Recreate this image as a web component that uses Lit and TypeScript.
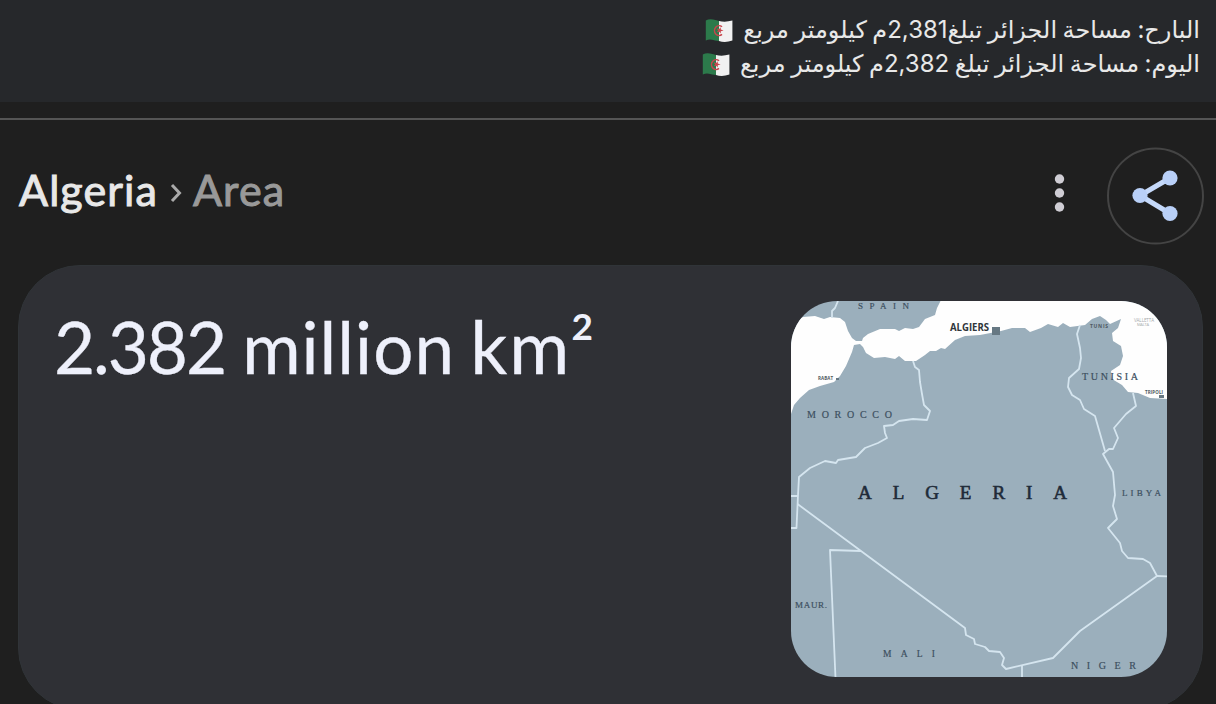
import { LitElement, css, html, svg } from "lit";
import { customElement, property } from "lit/decorators.js";

@customElement("flag-dz")
export class FlagDz extends LitElement {
    static styles = css`
    :host {
        display: block;
        flex: none;
        width: 28px;
        height: 25px;
        margin-top: 2px;
        white-space: normal;
    }

    svg {
        display: block;
    }
    `;

    render() {
        return html`
        <svg width="28" height="25" viewBox="0 0 28 25">
            <path fill="#2c7a4b" d="M.8 2.6Q4 .8 8 1.6T14 3V23Q10 22.6 7 21.8T.8 22.6Z"/>
            <path fill="#f1f1f1" d="M14 3Q20 4.6 27.4 2.6V22.6Q20 25 14 23Z"/>
            <path fill="none" stroke="#c8454c" stroke-width="1.5" d="M17 8.8A4.6 4.9 0 1 0 17 16.4"/>
            <path fill="#c8454c" d="M18.6 12.5l-2.8.8-.1 2.2-1.6-1.8-2.4.6 1.4-1.9-1.4-1.9 2.4.6 1.6-1.8.1 2.3z"/>
        </svg>
        `;
    }
}

interface Label {
    text: string;
    x: number;
    y: number;
    width: number;
    size: number;
    kind: string;
}

const labels: Label[] = [
    { text: "SPAIN", x: 858, y: 309, width: 51, size: 9, kind: "place" },
    { text: "MOROCCO", x: 807, y: 418, width: 85, size: 10, kind: "place" },
    { text: "ALGERIA", x: 858, y: 499, width: 209, size: 19, kind: "main" },
    { text: "TUNISIA", x: 1082, y: 380, width: 56, size: 10, kind: "place" },
    { text: "LIBYA", x: 1122, y: 496, width: 39, size: 9, kind: "place" },
    { text: "MAUR.", x: 795, y: 608, width: 32, size: 9, kind: "place" },
    { text: "MALI", x: 883, y: 657, width: 52, size: 9.5, kind: "place" },
    { text: "NIGER", x: 1071, y: 669, width: 65, size: 10, kind: "place" },
    { text: "ALGIERS", x: 950, y: 331, width: 39, size: 10.5, kind: "capital" },
    { text: "RABAT", x: 818, y: 380, width: 15, size: 4.5, kind: "tiny" },
    { text: "TUNIS", x: 1090, y: 328, width: 18, size: 5, kind: "tiny" },
    { text: "TRIPOLI", x: 1145, y: 394, width: 18, size: 4.5, kind: "tiny" },
    { text: "VALLETTA", x: 1134, y: 322, width: 20, size: 4.5, kind: "faint" },
    { text: "MALTA", x: 1137, y: 326, width: 12, size: 4, kind: "faint" },
];

const borders = [
    "M838 301L835 308L832 311L832 318",
    "M913 361L915 367L919 370L920 382L922 394L924 405L930 411L927 420L913 419L899 421L893 425L884 426L885 433L887 438L878 443L865 448L856 457L838 460L836 463L825 461L810 468L799 477L798 495L796.500 528L791 528",
    "M791 496L798 496M797.500 504L861 551L965 628L966 635L974 639L975 644L985 647L989 651L1000 652L1004 658L1002 665L1006 669L1053 658L1080 631L1157 576L1150 563L1143 559L1128 558L1122 551L1120 543L1108 528L1117 519L1113 506L1115 495L1113 472L1103 454L1109 449L1113 449L1118 438L1114 428L1126 414L1136 406L1133 393",
    "M861 551L830 550L835.500 678",
    "M1080 325L1077 334L1080 348L1081 358L1079 369L1069 378L1068 387L1072 395L1080 400L1084 409L1095 416L1105 451",
    "M1157 576L1168 576.500M1022 666L1022 678",
];

@customElement("area-map")
export class AreaMap extends LitElement {
    static styles = css`
    :host {
        display: block;
        width: 376px;
        height: 376px;
        border-radius: 46px;
        overflow: hidden;
        background: #9bafbc;
    }

    svg {
        display: block;
    }

    .sea {
        fill: #fefefe;
    }

    .border {
        fill: none;
        stroke: #d5e5ef;
        stroke-width: 1.8;
        stroke-linejoin: round;
    }

    text {
        font-family: "Liberation Serif", serif;
        fill: #3d4f5f;
    }

    .place {
        stroke: #3d4f5f;
        stroke-width: 0.2;
    }

    .main {
        fill: #1f2b39;
        stroke: #1f2b39;
        stroke-width: 0.6;
    }

    .capital {
        font-family: "Open Sans", sans-serif;
        font-weight: bold;
        fill: #30363b;
    }

    .tiny {
        font-family: "Open Sans", sans-serif;
        font-weight: bold;
        fill: #4f5960;
    }

    .faint {
        font-family: "Open Sans", sans-serif;
        fill: #a5a9ac;
    }

    .mark {
        fill: #667883;
    }
    `;

    render() {
        return html`
        <svg width="376" height="376" viewBox="791 301 376 376">
            <path class="sea" d="M791 414L794 405L800 398L809 390L820 386L834 382L840 376L846 366L852 352L854 345L860 344L863 347L866 353L874 358L885 357L895 359L899 356L905 361L916 361L925 355L930 351L936 351L941 348L945 349L955 340L965 336L980 335L1001 331L1012 328L1025 328L1030 332L1041 328L1048 324L1058 327L1063 323L1070 327L1085 325L1092 319L1100 316L1106 320L1110 324L1121 319L1118 328L1112 333L1113 341L1121 346L1123 356L1120 365L1111 371L1112 379L1122 385L1128 392L1138 393L1150 398L1168 399V300H941L937 308L935 315L925 319L919 327L913 329L905 328L899 331L895 329L880 329L868 334L863 338L862 341L856 341L852 338L848 331L845 322L840 318L830 317L824 319L815 316L803 317L791 324Z"/>
            ${borders.map(d => svg`<path class="border" d=${d}/>`)}
            <rect class="mark" x="992" y="327" width="8" height="8"/>
            <rect class="mark" x="836" y="378" width="3" height="2"/>
            <rect class="mark" x="1159" y="395" width="5" height="3"/>
            ${labels.map(l => svg`<text class=${l.kind} x=${l.x} y=${l.y} font-size=${l.size} textLength=${l.width} lengthAdjust=${l.kind === "capital" ? "spacingAndGlyphs" : "spacing"}>${l.text}</text>`)}
        </svg>
        `;
    }
}

@customElement("post-line")
export class PostLine extends LitElement {
    static styles = css`
    :host {
        display: flex;
        align-items: center;
        height: 34px;
        gap: 10px;
        white-space: nowrap;
        word-spacing: -1.2px;
    }
    `;

    @property() text = "";

    render() {
        return html`<span>${this.text}</span><flag-dz></flag-dz>`;
    }
}

@customElement("app-root")
export class AppRoot extends LitElement {
    static styles = css`
    :host {
        display: flex;
        flex-direction: column;
        height: 704px;
        overflow: hidden;
        background: #1f1f1f;
        color: #e8e8e8;
        font-family: Lato, sans-serif;
    }

    .post {
        flex: none;
        height: 102px;
        box-sizing: border-box;
        padding: 12px 16px 0;
        background: #26282b;
        font: 24px Inter, "DejaVu Sans", sans-serif;
    }

    .rule {
        flex: none;
        height: 2px;
        margin-top: 16px;
        background: #555;
    }

    .header {
        flex: none;
        display: flex;
        align-items: center;
        height: 98px;
        margin-top: 27px;
        padding: 0 12px 0 19px;
    }

    .crumbs {
        display: flex;
        align-items: center;
        flex: 1;
        font-size: 43px;
        line-height: 52px;
        letter-spacing: 1.1px;
        -webkit-text-stroke: 1px;
        margin-top: -13px;
    }

    .chevron {
        margin: 6px 11px 0 12px;
    }

    .current {
        color: #999;
    }

    .more {
        margin-top: -7px;
    }

    .share {
        margin-left: 41px;
    }

    .card {
        flex: none;
        display: flex;
        justify-content: space-between;
        box-sizing: border-box;
        height: 445px;
        margin: 20px 13px 0 18px;
        padding: 35px 35px 0 36px;
        border: 1px solid #303438;
        border-radius: 62px;
        background: #2f3035;
    }

    .value {
        margin-top: 3px;
        font-size: 71px;
        line-height: 86px;
        color: #eef0fb;
        white-space: nowrap;
        -webkit-text-stroke: 0.3px;
    }

    .number {
        letter-spacing: -2.1px;
        margin-left: -1px;
    }

    .scale {
        letter-spacing: 1px;
        margin-left: -1px;
    }

    .unit {
        letter-spacing: 2px;
        font-size: 73px;
        line-height: 1;
        margin-left: -3px;
    }

    .power {
        display: inline-block;
        font-size: 37px;
        font-weight: bold;
        line-height: 1;
        vertical-align: 34px;
        -webkit-text-stroke: 0;
    }
    `;

    render() {
        return html`
        <div class="post" dir="rtl">
            <post-line text="البارح: مساحة الجزائر تبلغ2,381م كيلومتر مربع"></post-line>
            <post-line text="اليوم: مساحة الجزائر تبلغ 2,382م كيلومتر مربع"></post-line>
        </div>
        <div class="rule"></div>
        <div class="header">
            <div class="crumbs">
                <span class="name">Algeria</span>
                <svg class="chevron" width="12" height="20" viewBox="0 0 12 20">
                    <path fill="none" stroke="#aaa" stroke-width="3" d="M2 2L9.500 10L2 18"/>
                </svg>
                <span class="current">Area</span>
            </div>
            <svg class="more" width="12" height="40" viewBox="0 0 12 40" fill="#cfcdd4">
                <circle cx="5.500" cy="6" r="4.700"/>
                <circle cx="5.500" cy="20" r="4.700"/>
                <circle cx="5.500" cy="34" r="4.700"/>
            </svg>
            <svg class="share" width="97" height="98" viewBox="0 0 97 98">
                <circle cx="48.500" cy="49" r="47.500" fill="none" stroke="#444" stroke-width="2"/>
                <path fill="none" stroke="#c5d9fa" stroke-width="5" d="M63 31L33 48.500L63 66.500"/>
                <g fill="#b9d0f8">
                    <circle cx="63" cy="31" r="7.600"/>
                    <circle cx="33" cy="48.500" r="7.600"/>
                    <circle cx="63" cy="66.500" r="7.600"/>
                </g>
            </svg>
        </div>
        <div class="card">
            <div class="value">
                <span class="number">2.382</span>
                <span class="scale">million</span>
                <span class="unit">km</span><span class="power">2</span>
            </div>
            <area-map></area-map>
        </div>
        `;
    }
}

declare global {
    interface HTMLElementTagNameMap {
        "flag-dz": FlagDz
        "area-map": AreaMap
        "post-line": PostLine
        "app-root": AppRoot
    }
}
